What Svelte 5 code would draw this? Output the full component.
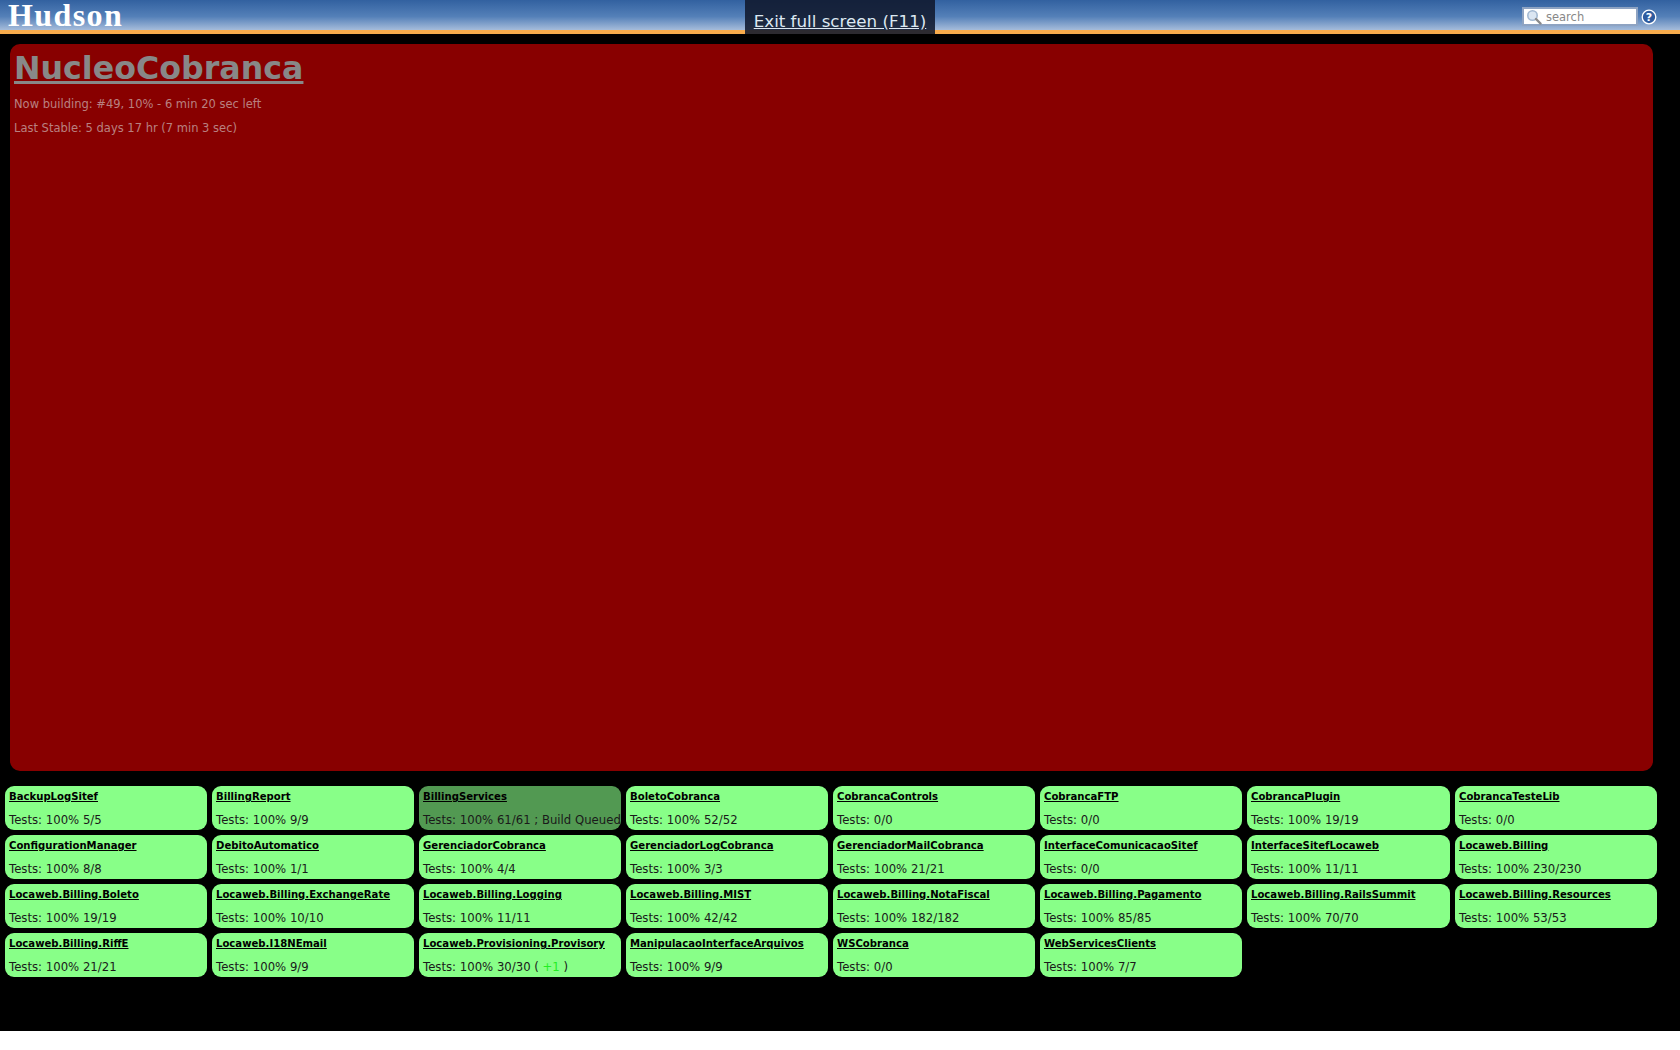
<script lang="ts">
  type Job = { name: string; tests: string; delta?: string; queued?: boolean };

  const jobs: Job[] = [
    { name: "BackupLogSitef", tests: "Tests: 100% 5/5" },
    { name: "BillingReport", tests: "Tests: 100% 9/9" },
    { name: "BillingServices", tests: "Tests: 100% 61/61 ; Build Queued", queued: true },
    { name: "BoletoCobranca", tests: "Tests: 100% 52/52" },
    { name: "CobrancaControls", tests: "Tests: 0/0" },
    { name: "CobrancaFTP", tests: "Tests: 0/0" },
    { name: "CobrancaPlugin", tests: "Tests: 100% 19/19" },
    { name: "CobrancaTesteLib", tests: "Tests: 0/0" },
    { name: "ConfigurationManager", tests: "Tests: 100% 8/8" },
    { name: "DebitoAutomatico", tests: "Tests: 100% 1/1" },
    { name: "GerenciadorCobranca", tests: "Tests: 100% 4/4" },
    { name: "GerenciadorLogCobranca", tests: "Tests: 100% 3/3" },
    { name: "GerenciadorMailCobranca", tests: "Tests: 100% 21/21" },
    { name: "InterfaceComunicacaoSitef", tests: "Tests: 0/0" },
    { name: "InterfaceSitefLocaweb", tests: "Tests: 100% 11/11" },
    { name: "Locaweb.Billing", tests: "Tests: 100% 230/230" },
    { name: "Locaweb.Billing.Boleto", tests: "Tests: 100% 19/19" },
    { name: "Locaweb.Billing.ExchangeRate", tests: "Tests: 100% 10/10" },
    { name: "Locaweb.Billing.Logging", tests: "Tests: 100% 11/11" },
    { name: "Locaweb.Billing.MIST", tests: "Tests: 100% 42/42" },
    { name: "Locaweb.Billing.NotaFiscal", tests: "Tests: 100% 182/182" },
    { name: "Locaweb.Billing.Pagamento", tests: "Tests: 100% 85/85" },
    { name: "Locaweb.Billing.RailsSummit", tests: "Tests: 100% 70/70" },
    { name: "Locaweb.Billing.Resources", tests: "Tests: 100% 53/53" },
    { name: "Locaweb.Billing.RiffE", tests: "Tests: 100% 21/21" },
    { name: "Locaweb.I18NEmail", tests: "Tests: 100% 9/9" },
    { name: "Locaweb.Provisioning.Provisory", tests: "Tests: 100% 30/30", delta: "+1" },
    { name: "ManipulacaoInterfaceArquivos", tests: "Tests: 100% 9/9" },
    { name: "WSCobranca", tests: "Tests: 0/0" },
    { name: "WebServicesClients", tests: "Tests: 100% 7/7" },
  ];
</script>

<div class="page">
  <header class="top">
    <div class="logo">Hudson</div>
    <div class="tools">
      <div class="search">
        <svg viewBox="0 0 16 16" width="16" height="16" fill="none">
          <circle cx="6.5" cy="6.5" r="4.7" fill="#dbe6f2" stroke="#a3b9d2" stroke-width="1.6" />
          <line x1="10" y1="10" x2="14.5" y2="14.5" stroke="#8a8a8a" stroke-width="2.4" stroke-linecap="round" />
        </svg>
        <span>search</span>
      </div>
      <svg class="help" viewBox="0 0 16 16" width="16" height="16">
        <circle cx="8" cy="8" r="6.8" fill="#2f5c9f" stroke="#fff" stroke-width="1.3" />
        <text x="8" y="12" text-anchor="middle" class="help-q">?</text>
      </svg>
    </div>
  </header>

  <a class="exit" href="#exit">Exit full screen (F11)</a>

  <main class="board">
    <section class="building">
      <h1><a href="#job">NucleoCobranca</a></h1>
      <p>Now building: #49, 10% - 6 min 20 sec left</p>
      <p>Last Stable: 5 days 17 hr (7 min 3 sec)</p>
    </section>

    <div class="jobs">
      {#each jobs as job (job.name)}
        <div class="job" class:queued={job.queued}>
          <a href="#job">{job.name}</a>
          <div class="tests">
            {job.tests}{#if job.delta}{" "}( <span class="delta">{job.delta}</span> ){/if}
          </div>
        </div>
      {/each}
    </div>
  </main>
</div>

<style>
  :global(body) {
    background: #fff;
  }

  .page {
    height: 1031px;
    background: #000;
    font-family: "DejaVu Sans", Verdana, sans-serif;
    overflow: hidden;
  }

  .top {
    height: 30px;
    border-bottom: 4px solid #f7ab4c;
    background: linear-gradient(#3261a0, #5480b8 55%, #a6bcda);
    display: flex;
    align-items: center;
    justify-content: space-between;
    padding: 0 8px;
  }

  .logo {
    font-family: "Liberation Serif", serif;
    font-weight: 700;
    font-size: 32px;
    letter-spacing: 1.4px;
    line-height: 34px;
    color: #fff;
  }

  .tools {
    display: flex;
    align-items: center;
    gap: 3px;
    padding-right: 15px;
    margin-top: 3px;
  }

  .search {
    flex: none;
    width: 116px;
    height: 19px;
    box-sizing: border-box;
    background: #fff;
    border: 2px solid #8ea3c2;
    display: flex;
    align-items: center;
    gap: 4px;
    padding-left: 2px;
    font-size: 11.5px;
    color: #888;
  }

  .help {
    display: block;
  }

  .help-q {
    font-size: 11px;
    font-weight: 700;
    fill: #fff;
  }

  .exit {
    position: absolute;
    top: 0;
    left: 745px;
    width: 190px;
    height: 34px;
    box-sizing: border-box;
    padding-top: 11px;
    text-align: center;
    background: rgba(16, 24, 44, 0.88);
    color: #dce8f2;
    font-size: 16.7px;
    line-height: 21px;
  }

  .board {
    padding: 10px 23px 0 5px;
  }

  .building {
    height: 727px;
    margin: 0 4px 0 5px;
    box-sizing: border-box;
    padding: 4px 4px;
    background: #880000;
    border-radius: 10px;
    color: #b98080;
  }

  .building h1 {
    margin: 0 0 9px;
    font-size: 31.7px;
    line-height: 40px;
    font-weight: 700;
  }

  .building h1 a {
    color: #888;
  }

  .building p {
    margin: 0 0 10px;
    line-height: 14px;
    font-size: 11.5px;
  }

  .jobs {
    margin-top: 15px;
    display: grid;
    grid-template-columns: repeat(6, 202px) 203px 1fr;
    gap: 5px;
  }

  .job {
    height: 44px;
    box-sizing: border-box;
    padding: 4px 0 0 4px;
    background: #88ff88;
    border-radius: 9px;
    color: #1a1a1a;
    font-size: 11.7px;
    white-space: nowrap;
    overflow: hidden;
  }

  .job a {
    display: block;
    color: #000;
    font-size: 10.1px;
    font-weight: 700;
    line-height: 13px;
  }

  .tests {
    margin-top: 11px;
    line-height: 13px;
  }

  .job.queued {
    background: #529952;
  }

  .delta {
    color: #22ee22;
  }
</style>
